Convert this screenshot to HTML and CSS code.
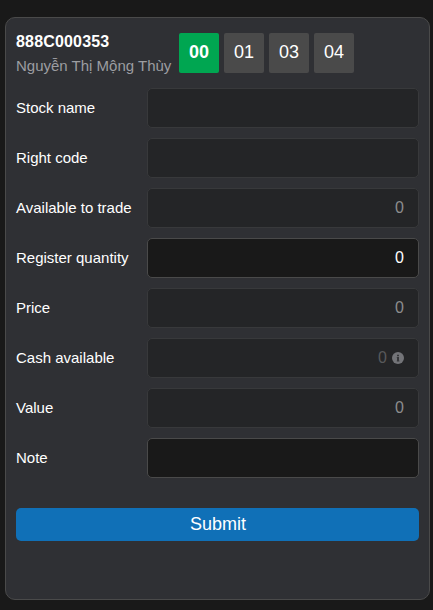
FILE: index.html
```html
<!DOCTYPE html>
<html lang="en">
<head>
<meta charset="utf-8">
<title>Register right</title>
<link rel="stylesheet" href="styles.css">
</head>
<body>
<form class="card">
  <header class="account">
    <div class="owner">
      <div class="owner-id">888C000353</div>
      <div class="owner-name">Nguyễn Thị Mộng Thùy</div>
    </div>
    <div class="tabs">
      <button type="button" class="tab active">00</button>
      <button type="button" class="tab">01</button>
      <button type="button" class="tab">03</button>
      <button type="button" class="tab">04</button>
    </div>
  </header>
  <div class="fields">
    <div class="row"><span class="label">Stock name</span><div class="field"></div></div>
    <div class="row"><span class="label">Right code</span><div class="field"></div></div>
    <div class="row"><span class="label">Available to trade</span><div class="field">0</div></div>
    <div class="row"><span class="label">Register quantity</span><div class="field editable">0</div></div>
    <div class="row"><span class="label">Price</span><div class="field">0</div></div>
    <div class="row"><span class="label">Cash available</span><div class="field muted">0
      <svg class="info" viewBox="0 0 12 12" width="12" height="12"><circle cx="6" cy="6" r="6" fill="#737478"/><path d="M5 2.8h2v1.4H5zM4.8 5H7v3.5h.4v1H4.8v-1H5V6h-.2z" fill="#36373a"/></svg>
    </div></div>
    <div class="row"><span class="label">Value</span><div class="field">0</div></div>
    <div class="row"><span class="label">Note</span><div class="field editable"></div></div>
  </div>
  <button type="button" class="submit">Submit</button>
</form>
</body>
</html>
```

FILE: styles.css
```css
* {
  box-sizing: border-box;
}

body {
  margin: 0;
  padding: 17px 3px 10px 5px;
  height: 610px;
  background: #191919;
  color: #fff;
  font: 15px/20px "Liberation Sans", Arial, sans-serif;
}

.card {
  height: 583px;
  padding: 15px 10px;
  border: 1px solid #4a4a4a;
  border-radius: 10px;
  background: #2f3034;
}

.account {
  display: flex;
  gap: 8px;
  height: 40px;
}

.owner {
  width: 155px;
  white-space: nowrap;
}

.owner-id {
  height: 20px;
  line-height: 17px;
  font-size: 16px;
  font-weight: bold;
  letter-spacing: 0.17px;
}

.owner-name {
  line-height: 25px;
  color: #9c9da1;
}

.tabs {
  display: flex;
  gap: 5px;
}

.tab {
  width: 40px;
  height: 40px;
  padding: 0 0 2px;
  border: 0;
  border-radius: 2px;
  background: #4a4a4a;
  color: #fff;
  font: 18px/20px "Liberation Sans", Arial, sans-serif;
}

.tab.active {
  background: #00a651;
  font-weight: bold;
}

.fields {
  display: grid;
  gap: 10px;
  margin-top: 15px;
}

.row {
  display: grid;
  grid-template-columns: 131px 1fr;
  align-items: center;
}

.field {
  display: flex;
  align-items: center;
  justify-content: flex-end;
  gap: 5px;
  height: 40px;
  padding: 0 14px;
  border: 1px solid #38393b;
  border-radius: 5px;
  background: #242527;
  color: #8c8d8e;
  font-size: 16px;
}

.field.editable {
  border-color: #4a4a4a;
  background: #191919;
  color: #fff;
}

.field.muted {
  color: #58595b;
}

.info {
  display: block;
}

.submit {
  display: block;
  width: 100%;
  height: 33px;
  margin-top: 30px;
  padding: 0 0 1px 1px;
  border: 0;
  border-radius: 5px;
  background: #1070b7;
  color: #fff;
  font: 18px/20px "Liberation Sans", Arial, sans-serif;
}
```
